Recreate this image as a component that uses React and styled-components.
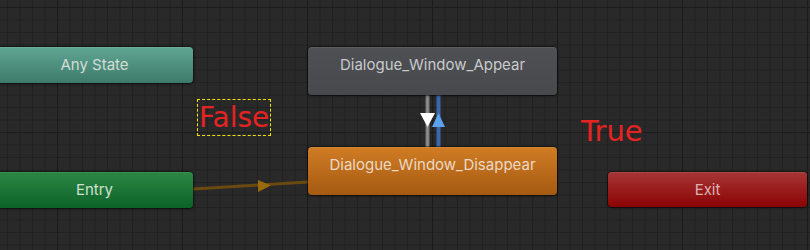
import React from "react";
import styled, { createGlobalStyle } from "styled-components";

const Global = createGlobalStyle`
  html, body { margin: 0; padding: 0; background: #282828; }
  body { width: 810px; height: 250px; overflow: hidden; }
`;

const Canvas = styled.div`
  position: relative;
  width: 810px;
  height: 250px;
  overflow: hidden;
  background-color: #292929;
  background-image:
    linear-gradient(to right, #1b1b1b 1px, transparent 1px),
    linear-gradient(to bottom, #1b1b1b 1px, transparent 1px),
    linear-gradient(to right, #212121 1px, transparent 1px),
    linear-gradient(to bottom, #212121 1px, transparent 1px);
  background-size: 125px 125px, 125px 125px, 12.5px 12.5px, 12.5px 12.5px;
  background-position: 57px 0, 0 7px, 7px 0, 0 7px;
  font-family: Inter, "Noto Sans", sans-serif;
`;

const Wires = styled.svg`
  position: absolute;
  left: 0;
  top: 0;
  width: 810px;
  height: 250px;
`;

const Node = styled.div`
  position: absolute;
  left: ${(p) => p.$x}px;
  top: ${(p) => p.$y}px;
  width: ${(p) => p.$w}px;
  height: ${(p) => p.$h}px;
  box-sizing: border-box;
  border-radius: 4px;
  background: linear-gradient(to bottom, ${(p) => p.$top}, ${(p) => p.$bottom});
  box-shadow: 0 0 0 1px rgba(0, 0, 0, 0.35), 0 1px 3px rgba(0, 0, 0, 0.45),
    inset 0 1px 0 rgba(255, 255, 255, 0.08);
  color: ${(p) => p.$ink};
  display: flex;
  justify-content: center;
  align-items: flex-start;
`;

const NodeLabel = styled.span`
  display: block;
  height: 35px;
  line-height: 35px;
  font-size: 15px;
  white-space: nowrap;
`;

const Condition = styled.div`
  position: absolute;
  left: ${(p) => p.$x}px;
  top: ${(p) => p.$y}px;
  box-sizing: border-box;
  padding: 0 1px;
  height: ${(p) => (p.$boxed ? 37 : 36)}px;
  border: 1px ${(p) => (p.$boxed ? "dashed #f2e600" : "solid transparent")};
  color: #e62323;
  font-family: "DejaVu Sans", sans-serif;
  font-size: ${(p) => p.$size}px;
  line-height: 36px;
  white-space: nowrap;
`;

const nodes = [
  { name: "Any State", x: -4, y: 47, w: 197, h: 36, top: "#60a692", bottom: "#3d7a6a", ink: "#d4dcd8" },
  { name: "Dialogue_Window_Appear", x: 308, y: 47, w: 249, h: 48, top: "#4e5054", bottom: "#47494d", ink: "#c9cacc" },
  { name: "Dialogue_Window_Disappear", x: 308, y: 147, w: 249, h: 48, top: "#d07c24", bottom: "#a55a12", ink: "#ecd9c4" },
  { name: "Entry", x: -4, y: 172, w: 197, h: 36, top: "#2c8744", bottom: "#0c6328", ink: "#cfe0d2" },
  { name: "Exit", x: 608, y: 172, w: 199, h: 35, top: "#a73636", bottom: "#8b0303", ink: "#dcb3b3" },
];

export default function App() {
  return (
    <>
      <Global />
      <Canvas>
        <Wires viewBox="0 0 810 250">
          <line x1="193" y1="189" x2="308" y2="182" stroke="#6b4a10" strokeWidth="3" />
          <polygon points="258,180 271,185.5 258,192" fill="#9a6a0e" />
          <line x1="427.5" y1="95" x2="427.5" y2="147" stroke="#7a7a7a" strokeWidth="4" />
          <line x1="427.5" y1="95" x2="427.5" y2="147" stroke="#909090" strokeWidth="1.5" />
          <line x1="438.5" y1="95" x2="438.5" y2="147" stroke="#3a68a8" strokeWidth="4" />
          <polygon points="420,113 435,113 427.5,127" fill="#ffffff" />
          <polygon points="432,127 445,127 438.5,113" fill="#5aa2ee" />
        </Wires>
        {nodes.map((n) => (
          <Node key={n.name} $x={n.x} $y={n.y} $w={n.w} $h={n.h} $top={n.top} $bottom={n.bottom} $ink={n.ink}>
            <NodeLabel>{n.name}</NodeLabel>
          </Node>
        ))}
        <Condition $x={197} $y={99} $size={28} $boxed>False</Condition>
        <Condition $x={579} $y={112} $size={29}>True</Condition>
      </Canvas>
    </>
  );
}
